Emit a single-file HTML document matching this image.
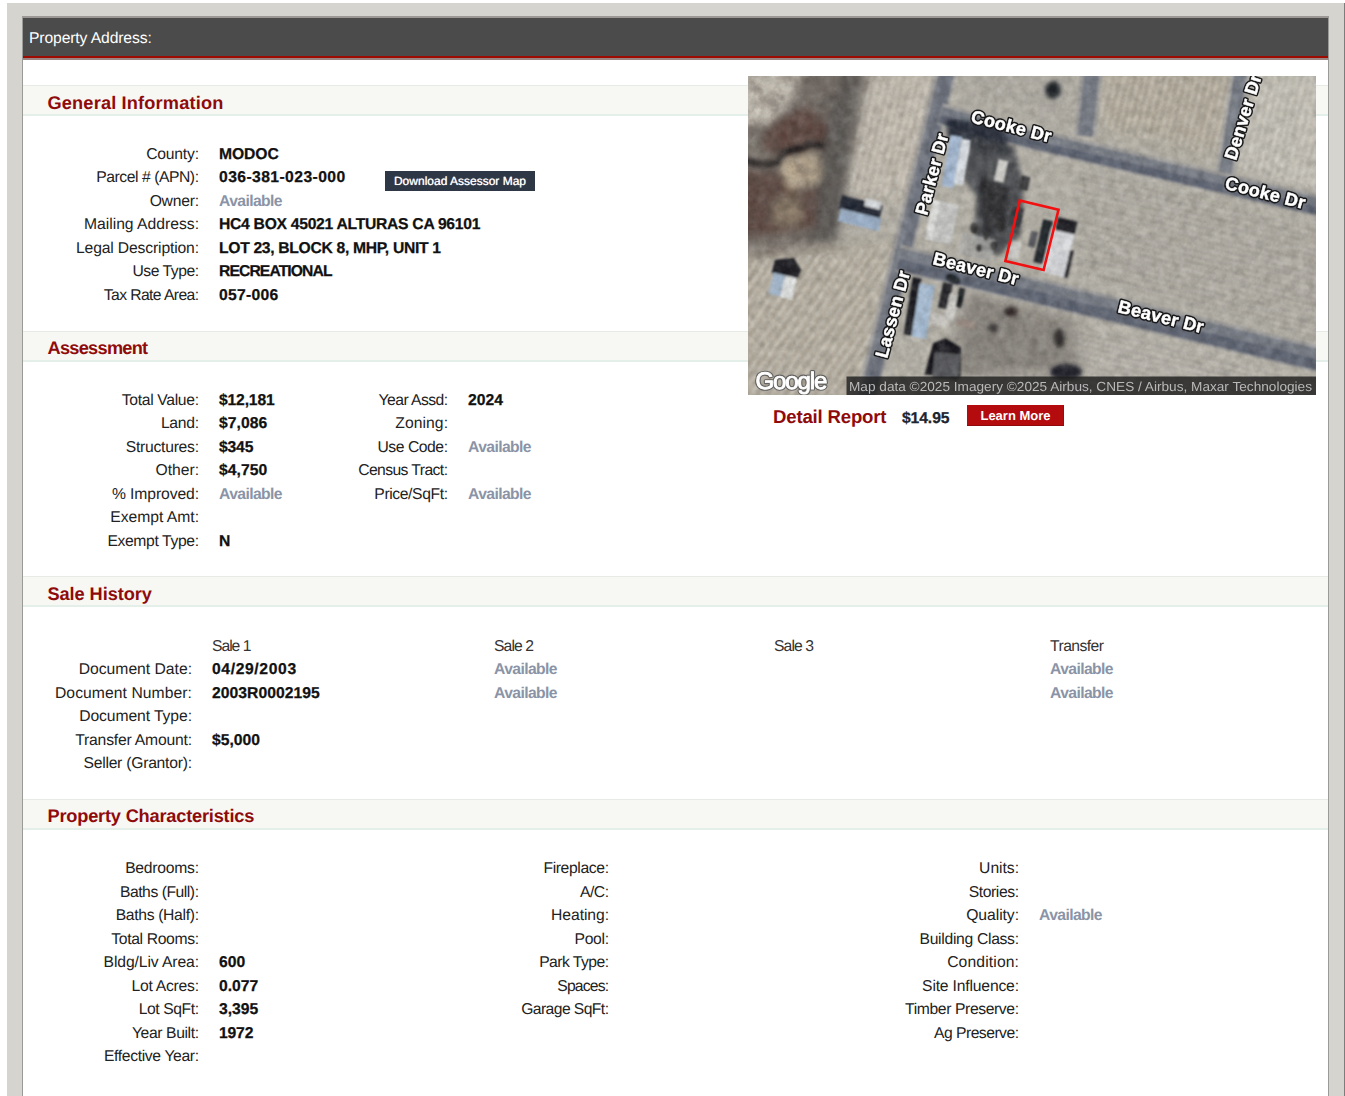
<!DOCTYPE html>
<html lang="en"><head><meta charset="utf-8"><title>Property Detail</title>
<style>
html,body{margin:0;padding:0;}
body{width:1345px;height:1096px;overflow:hidden;background:#fff;position:relative;text-rendering:geometricPrecision;font-family:"Liberation Sans",Arial,sans-serif;font-size:15.7px;color:#222;}
#bg{position:absolute;left:7px;top:3px;width:1337px;height:1093px;background:#d5d4ce;}
#edge{position:absolute;left:1344px;top:3px;width:1px;height:1093px;background:#7d7d7b;}
#panel{position:absolute;left:22px;top:16px;width:1305px;height:1090px;background:#fff;border:1px solid #9a9a98;border-top:2px solid #9c9896;}
#bar{position:absolute;left:0;top:0;width:1305px;height:38px;background:#4b4b4b;border-bottom:2px solid #9d0a02;box-shadow:0 2px 0 #9a8583;color:#fff;}
#bar div{position:absolute;left:6px;top:2px;line-height:38px;white-space:nowrap;}
.band{position:absolute;left:0;width:1305px;height:28px;background:#f7f8f3;border-top:1px solid #e6ebe5;border-bottom:2px solid #e3efe8;}
.band h2{position:absolute;left:24.5px;top:1px;margin:0;font-size:18.2px;line-height:28px;font-weight:bold;color:#8f0a0a;white-space:nowrap;}
.r{position:absolute;height:23.5px;line-height:23.5px;white-space:nowrap;}
.l{text-align:right;color:#222;}
.v{font-weight:bold;color:#111;-webkit-text-stroke:0.25px #111;}
.a{font-weight:bold;color:#8a94a6;}
.h{color:#333;}
</style></head>
<body>
<div id="bg"></div><div id="edge"></div>
<div id="panel">
<div id="bar"><div><span class="t" style="letter-spacing:-0.119px">Property Address:</span></div></div>
<div class="band" style="top:67px"><h2 style="top:2.6px"><span class="t" style="letter-spacing:0.167px">General Information</span></h2></div>
<div class="r l" style="left:-124px;width:300px;top:124.5px"><span class="t" style="letter-spacing:-0.2px;margin-right:0.2px">County:</span></div>
<div class="r v" style="left:196px;top:124.5px"><span class="t" style="letter-spacing:-0.075px">MODOC</span></div>
<div class="r l" style="left:-124px;width:300px;top:148.0px"><span class="t" style="letter-spacing:-0.443px;margin-right:0.443px">Parcel # (APN):</span></div>
<div class="r v" style="left:196px;top:148.0px"><span class="t" style="letter-spacing:0.414px">036-381-023-000</span></div>
<div class="r l" style="left:-124px;width:300px;top:171.5px"><span class="t" style="letter-spacing:-0.24px;margin-right:0.24px">Owner:</span></div>
<div class="r a" style="left:196px;top:171.5px"><span class="t" style="letter-spacing:-0.588px">Available</span></div>
<div class="r l" style="left:-124px;width:300px;top:195.0px"><span class="t">Mailing Address:</span></div>
<div class="r v" style="left:196px;top:195.0px"><span class="t" style="letter-spacing:-0.286px">HC4 BOX 45021 ALTURAS CA 96101</span></div>
<div class="r l" style="left:-124px;width:300px;top:218.5px"><span class="t" style="letter-spacing:-0.153px;margin-right:0.153px">Legal Description:</span></div>
<div class="r v" style="left:196px;top:218.5px"><span class="t" style="letter-spacing:-0.322px">LOT 23, BLOCK 8, MHP, UNIT 1</span></div>
<div class="r l" style="left:-124px;width:300px;top:242.0px"><span class="t" style="letter-spacing:-0.475px;margin-right:0.475px">Use Type:</span></div>
<div class="r v" style="left:196px;top:242.0px"><span class="t" style="letter-spacing:-0.9px">RECREATIONAL</span></div>
<div class="r l" style="left:-124px;width:300px;top:265.5px"><span class="t" style="letter-spacing:-0.592px;margin-right:0.592px">Tax Rate Area:</span></div>
<div class="r v" style="left:196px;top:265.5px"><span class="t" style="letter-spacing:0.283px">057-006</span></div>
<div id="dl" style="position:absolute;left:362px;top:153px;width:150px;height:20px;background:#2e3745;color:#fff;font-size:12px;line-height:20px;text-align:center;white-space:nowrap;text-shadow:0 0 .7px rgba(255,255,255,.9)"><span class="t">Download Assessor Map</span></div>
<div class="band" style="top:313px"><h2 style="top:2px"><span class="t" style="letter-spacing:-0.722px">Assessment</span></h2></div>
<div class="r l" style="left:-124px;width:300px;top:370.5px"><span class="t" style="letter-spacing:-0.327px;margin-right:0.327px">Total Value:</span></div>
<div class="r v" style="left:196px;top:370.5px"><span class="t" style="letter-spacing:-0.167px">$12,181</span></div>
<div class="r l" style="left:125px;width:300px;top:370.5px"><span class="t" style="letter-spacing:-0.556px;margin-right:0.556px">Year Assd:</span></div>
<div class="r v" style="left:445px;top:370.5px"><span class="t" style="letter-spacing:0.033px">2024</span></div>
<div class="r l" style="left:-124px;width:300px;top:394.0px"><span class="t" style="letter-spacing:-0.3px;margin-right:0.3px">Land:</span></div>
<div class="r v" style="left:196px;top:394.0px"><span class="t" style="letter-spacing:0.04px">$7,086</span></div>
<div class="r l" style="left:125px;width:300px;top:394.0px"><span class="t" style="letter-spacing:0.067px;margin-right:-0.067px">Zoning:</span></div>
<div class="r l" style="left:-124px;width:300px;top:417.5px"><span class="t" style="letter-spacing:-0.26px;margin-right:0.26px">Structures:</span></div>
<div class="r v" style="left:196px;top:417.5px"><span class="t" style="letter-spacing:-0.167px">$345</span></div>
<div class="r l" style="left:125px;width:300px;top:417.5px"><span class="t" style="letter-spacing:-0.438px;margin-right:0.438px">Use Code:</span></div>
<div class="r a" style="left:445px;top:417.5px"><span class="t" style="letter-spacing:-0.588px">Available</span></div>
<div class="r l" style="left:-124px;width:300px;top:441.0px"><span class="t" style="letter-spacing:-0.04px;margin-right:0.04px">Other:</span></div>
<div class="r v" style="left:196px;top:441.0px"><span class="t" style="letter-spacing:0.04px">$4,750</span></div>
<div class="r l" style="left:125px;width:300px;top:441.0px"><span class="t" style="letter-spacing:-0.575px;margin-right:0.575px">Census Tract:</span></div>
<div class="r l" style="left:-124px;width:300px;top:464.5px"><span class="t" style="letter-spacing:-0.1px;margin-right:0.1px">% Improved:</span></div>
<div class="r a" style="left:196px;top:464.5px"><span class="t" style="letter-spacing:-0.588px">Available</span></div>
<div class="r l" style="left:125px;width:300px;top:464.5px"><span class="t" style="letter-spacing:-0.39px;margin-right:0.39px">Price/SqFt:</span></div>
<div class="r a" style="left:445px;top:464.5px"><span class="t" style="letter-spacing:-0.588px">Available</span></div>
<div class="r l" style="left:-124px;width:300px;top:488.0px"><span class="t" style="letter-spacing:-0.02px;margin-right:0.02px">Exempt Amt:</span></div>
<div class="r l" style="left:-124px;width:300px;top:511.5px"><span class="t" style="letter-spacing:-0.364px;margin-right:0.364px">Exempt Type:</span></div>
<div class="r v" style="left:196px;top:511.5px"><span class="t">N</span></div>
<div class="band" style="top:558px"><h2 style="top:2.6px"><span class="t" style="letter-spacing:-0.073px">Sale History</span></h2></div>
<div class="r h" style="left:189px;top:616.5px"><span class="t" style="letter-spacing:-1.02px">Sale 1</span></div>
<div class="r h" style="left:471px;top:616.5px"><span class="t" style="letter-spacing:-0.88px">Sale 2</span></div>
<div class="r h" style="left:751px;top:616.5px"><span class="t" style="letter-spacing:-0.88px">Sale 3</span></div>
<div class="r h" style="left:1027px;top:616.5px"><span class="t" style="letter-spacing:-0.543px">Transfer</span></div>
<div class="r l" style="left:-131px;width:300px;top:640.0px"><span class="t" style="letter-spacing:-0.008px;margin-right:0.008px">Document Date:</span></div>
<div class="r v" style="left:189px;top:640.0px"><span class="t" style="letter-spacing:0.622px">04/29/2003</span></div>
<div class="r a" style="left:471px;top:640.0px"><span class="t" style="letter-spacing:-0.588px">Available</span></div>
<div class="r a" style="left:1027px;top:640.0px"><span class="t" style="letter-spacing:-0.588px">Available</span></div>
<div class="r l" style="left:-131px;width:300px;top:663.5px"><span class="t" style="letter-spacing:0.067px;margin-right:-0.067px">Document Number:</span></div>
<div class="r v" style="left:189px;top:663.5px"><span class="t" style="letter-spacing:0.045px">2003R0002195</span></div>
<div class="r a" style="left:471px;top:663.5px"><span class="t" style="letter-spacing:-0.588px">Available</span></div>
<div class="r a" style="left:1027px;top:663.5px"><span class="t" style="letter-spacing:-0.588px">Available</span></div>
<div class="r l" style="left:-131px;width:300px;top:687.0px"><span class="t" style="letter-spacing:-0.085px;margin-right:0.085px">Document Type:</span></div>
<div class="r l" style="left:-131px;width:300px;top:710.5px"><span class="t" style="letter-spacing:-0.2px;margin-right:0.2px">Transfer Amount:</span></div>
<div class="r v" style="left:189px;top:710.5px"><span class="t" style="letter-spacing:-0.02px">$5,000</span></div>
<div class="r l" style="left:-131px;width:300px;top:734.0px"><span class="t" style="letter-spacing:-0.244px;margin-right:0.244px">Seller (Grantor):</span></div>
<div class="band" style="top:781px"><h2 style="top:2.4px"><span class="t" style="letter-spacing:-0.191px">Property Characteristics</span></h2></div>
<div class="r l" style="left:-124px;width:300px;top:839.0px"><span class="t" style="letter-spacing:-0.25px;margin-right:0.25px">Bedrooms:</span></div>
<div class="r l" style="left:-124px;width:300px;top:862.5px"><span class="t" style="letter-spacing:-0.458px;margin-right:0.458px">Baths (Full):</span></div>
<div class="r l" style="left:-124px;width:300px;top:886.0px"><span class="t" style="letter-spacing:-0.317px;margin-right:0.317px">Baths (Half):</span></div>
<div class="r l" style="left:-124px;width:300px;top:909.5px"><span class="t" style="letter-spacing:-0.355px;margin-right:0.355px">Total Rooms:</span></div>
<div class="r l" style="left:-124px;width:300px;top:933.0px"><span class="t" style="letter-spacing:-0.108px;margin-right:0.108px">Bldg/Liv Area:</span></div>
<div class="r v" style="left:196px;top:933.0px"><span class="t" style="letter-spacing:0.05px">600</span></div>
<div class="r l" style="left:-124px;width:300px;top:956.5px"><span class="t" style="letter-spacing:-0.256px;margin-right:0.256px">Lot Acres:</span></div>
<div class="r v" style="left:196px;top:956.5px"><span class="t" style="letter-spacing:-0.025px">0.077</span></div>
<div class="r l" style="left:-124px;width:300px;top:980.0px"><span class="t" style="letter-spacing:-0.412px;margin-right:0.412px">Lot SqFt:</span></div>
<div class="r v" style="left:196px;top:980.0px"><span class="t" style="letter-spacing:-0.025px">3,395</span></div>
<div class="r l" style="left:-124px;width:300px;top:1003.5px"><span class="t" style="letter-spacing:-0.39px;margin-right:0.39px">Year Built:</span></div>
<div class="r v" style="left:196px;top:1003.5px"><span class="t" style="letter-spacing:-0.167px">1972</span></div>
<div class="r l" style="left:-124px;width:300px;top:1027.0px"><span class="t" style="letter-spacing:-0.357px;margin-right:0.357px">Effective Year:</span></div>
<div class="r l" style="left:286px;width:300px;top:839.0px"><span class="t" style="letter-spacing:-0.367px;margin-right:0.367px">Fireplace:</span></div>
<div class="r l" style="left:286px;width:300px;top:862.5px"><span class="t" style="letter-spacing:-0.533px;margin-right:0.533px">A/C:</span></div>
<div class="r l" style="left:286px;width:300px;top:886.0px"><span class="t" style="letter-spacing:-0.071px;margin-right:0.071px">Heating:</span></div>
<div class="r l" style="left:286px;width:300px;top:909.5px"><span class="t" style="letter-spacing:-0.325px;margin-right:0.325px">Pool:</span></div>
<div class="r l" style="left:286px;width:300px;top:933.0px"><span class="t" style="letter-spacing:-0.544px;margin-right:0.544px">Park Type:</span></div>
<div class="r l" style="left:286px;width:300px;top:956.5px"><span class="t" style="letter-spacing:-0.833px;margin-right:0.833px">Spaces:</span></div>
<div class="r l" style="left:286px;width:300px;top:980.0px"><span class="t" style="letter-spacing:-0.573px;margin-right:0.573px">Garage SqFt:</span></div>
<div class="r l" style="left:696px;width:300px;top:839.0px"><span class="t" style="letter-spacing:-0.04px;margin-right:0.04px">Units:</span></div>
<div class="r l" style="left:696px;width:300px;top:862.5px"><span class="t" style="letter-spacing:-0.429px;margin-right:0.429px">Stories:</span></div>
<div class="r l" style="left:696px;width:300px;top:886.0px"><span class="t" style="letter-spacing:-0.057px;margin-right:0.057px">Quality:</span></div>
<div class="r a" style="left:1016px;top:886.0px"><span class="t" style="letter-spacing:-0.588px">Available</span></div>
<div class="r l" style="left:696px;width:300px;top:909.5px"><span class="t" style="letter-spacing:-0.307px;margin-right:0.307px">Building Class:</span></div>
<div class="r l" style="left:696px;width:300px;top:933.0px"><span class="t" style="letter-spacing:0.133px;margin-right:-0.133px">Condition:</span></div>
<div class="r l" style="left:696px;width:300px;top:956.5px"><span class="t" style="letter-spacing:-0.179px;margin-right:0.179px">Site Influence:</span></div>
<div class="r l" style="left:696px;width:300px;top:980.0px"><span class="t" style="letter-spacing:-0.387px;margin-right:0.387px">Timber Preserve:</span></div>
<div class="r l" style="left:696px;width:300px;top:1003.5px"><span class="t" style="letter-spacing:-0.518px;margin-right:0.518px">Ag Preserve:</span></div>
<svg id="map" width="568" height="319" viewBox="0 0 568 319" style="position:absolute;left:725px;top:58px;display:block;overflow:hidden">
<defs>
<filter id="b05" x="-5%" y="-5%" width="110%" height="110%"><feGaussianBlur stdDeviation="0.6"/></filter>
<filter id="b1" x="-20%" y="-20%" width="140%" height="140%"><feGaussianBlur stdDeviation="1"/></filter>
<filter id="b2" x="-20%" y="-20%" width="140%" height="140%"><feGaussianBlur stdDeviation="2"/></filter>
<filter id="b4" x="-30%" y="-30%" width="160%" height="160%"><feGaussianBlur stdDeviation="4"/></filter>
<filter id="b8" x="-40%" y="-40%" width="180%" height="180%"><feGaussianBlur stdDeviation="8"/></filter>
<filter id="b14" x="-50%" y="-50%" width="200%" height="200%"><feGaussianBlur stdDeviation="14"/></filter>
<filter id="noise" x="0" y="0" width="100%" height="100%">
<feTurbulence type="fractalNoise" baseFrequency="0.12" numOctaves="3" seed="7" result="n"/>
<feColorMatrix in="n" type="matrix" values="0 0 0 0 0  0 0 0 0 0  0 0 0 0 0  0.9 0.9 0.9 0 -0.95"/>
</filter>
<filter id="noise3" x="0" y="0" width="100%" height="100%">
<feTurbulence type="fractalNoise" baseFrequency="0.06" numOctaves="4" seed="11" result="n"/>
<feColorMatrix in="n" type="matrix" values="0 0 0 0 0.1  0 0 0 0 0.08  0 0 0 0 0.07  1.6 1.6 1.6 0 -2.1"/>
</filter>
<filter id="noise2" x="0" y="0" width="100%" height="100%">
<feTurbulence type="fractalNoise" baseFrequency="0.10" numOctaves="3" seed="23" result="n"/>
<feColorMatrix in="n" type="matrix" values="0 0 0 0 1  0 0 0 0 1  0 0 0 0 1  0.9 0.9 0.9 0 -0.98"/>
</filter>
<pattern id="st1" width="7" height="7" patternUnits="userSpaceOnUse" patternTransform="rotate(-76)"><rect width="7" height="7" fill="none"/><rect y="0" width="7" height="3" fill="#fff" opacity=".2"/></pattern>
<pattern id="st2" width="6" height="6" patternUnits="userSpaceOnUse" patternTransform="rotate(14)"><rect y="0" width="6" height="2.2" fill="#6d675e" opacity=".16"/></pattern>
<pattern id="st3" width="8" height="8" patternUnits="userSpaceOnUse" patternTransform="rotate(-55)"><rect y="0" width="8" height="3.5" fill="#fff" opacity=".22"/></pattern>
<clipPath id="mc"><rect width="568" height="319"/></clipPath>
</defs>
<g clip-path="url(#mc)">
<rect width="568" height="319" fill="#b7b3a9"/>
<g filter="url(#b8)">
<polygon points="-20,-20 130,-20 118,40 104,90 96,130 84,178 -20,190" fill="#7b756e"/>
</g><g filter="url(#b4)">
<polygon points="-20,-20 62,-20 42,25 25,46 -20,54" fill="#cbc5b9"/>
<polygon points="58,-10 100,-10 80,40 66,90 58,165 86,168 100,100 114,40 126,-10" fill="#5d5a56"/>
<polygon points="22,46 58,30 80,48 76,68 40,80 12,72" fill="#5e4640"/>
<polygon points="-10,96 30,95 45,114 70,110 68,152 -10,162" fill="#5f4943"/>
<polygon points="30,84 70,78 72,104 42,114" fill="#c4b398"/>
<polygon points="24,122 52,120 54,148 26,150" fill="#8c7b68"/>
<polygon points="-10,60 14,68 10,82 -10,82" fill="#8a857c"/>
</g><g filter="url(#b8)">
<polygon points="118,-10 190,-10 160,125 100,120" fill="#beb6a9"/>
<polygon points="-20,180 150,165 110,330 -20,330" fill="#b2aa9b"/>
<polygon points="355,-10 490,-10 470,80 345,50" fill="#b0a898"/>
<polygon points="505,-10 590,-10 590,120 490,95" fill="#c1bdb2"/>
<polygon points="330,85 590,150 590,270 330,205" fill="#b6b2a9"/>
<polygon points="200,215 590,305 590,330 200,330" fill="#bcb8af"/>
<polygon points="215,-10 330,-10 325,45 215,25" fill="#b1ada4"/>
<polygon points="215,215 330,245 330,300 200,300" fill="#8a857e"/>
</g>
<g filter="url(#b1)">
<polygon points="118,0 188,0 160,122 100,118" fill="url(#st1)"/>
<polygon points="0,185 145,170 110,319 0,319" fill="url(#st3)"/>
<polygon points="355,0 490,0 470,80 345,50" fill="url(#st1)"/>
<polygon points="505,0 568,0 568,115 490,95" fill="url(#st1)"/>
<polygon points="330,90 568,150 568,262 330,200" fill="url(#st2)"/>
<polygon points="330,250 568,305 568,319 330,319" fill="url(#st2)"/>
</g>
<g filter="url(#b2)"><polyline points="-5,84 15,89 28,87 36,76 50,73 62,68 78,70" fill="none" stroke="#262220" stroke-width="7" stroke-linejoin="round"/><polyline points="70,30 90,20 110,5" fill="none" stroke="#5b5753" stroke-width="4"/></g>
<g filter="url(#b1)">
<polygon points="187.22,-5 209.22,-5 128.7,325 106.7,325" fill="#a09f9d"/>
<polygon points="191.22,-5 207.22,-5 126.7,325 110.7,325" fill="#777b85"/>
<polygon points="196.22,-5 206.22,-5 125.7,325 115.7,325" fill="#6c717c"/>
<polyline points="344,-5 337,60" fill="none" stroke="#a09f9d" stroke-width="22"/>
<polyline points="344,-5 337,60" fill="none" stroke="#777b85" stroke-width="15"/>
<polyline points="493,-5 477,98" fill="none" stroke="#b0afab" stroke-width="20"/>
<polyline points="493,-5 477,98" fill="none" stroke="#777b85" stroke-width="13"/>
<polyline points="192,38 284,63 575,131" fill="none" stroke="#a09f9d" stroke-width="22"/>
<polyline points="192,39 284,64 575,132" fill="none" stroke="#777b85" stroke-width="17"/>
<polyline points="192,43 284,68 575,136" fill="none" stroke="#5f6573" stroke-width="8"/>
<polyline points="150,182 284,214 575,284" fill="none" stroke="#a09f9d" stroke-width="27"/>
<polyline points="150,183 284,215 575,285" fill="none" stroke="#777b85" stroke-width="22"/>
<polyline points="150,188 284,220 575,290" fill="none" stroke="#5f6573" stroke-width="11"/>
</g>
<g filter="url(#b2)">
<polygon points="198,44 255,46 262,78 236,80 224,70 200,64" fill="#1f2430" opacity=".9"/><polygon points="222,62 266,70 276,110 272,160 250,180 226,170 228,120 214,100" fill="#3d3f44" opacity=".85"/>
<polygon points="230,100 262,112 258,150 236,160" fill="#25272b" opacity=".8"/>
<ellipse cx="305" cy="14" rx="8" ry="9" fill="#22252b"/>
<ellipse cx="263" cy="236" rx="7" ry="5" fill="#2a2220"/>
<ellipse cx="311" cy="262" rx="5" ry="10" fill="#2a2826"/>
<ellipse cx="245" cy="252" rx="5" ry="4" fill="#2a2826"/>
<ellipse cx="318" cy="296" rx="16" ry="8" fill="#1d1f26"/>
</g>
<g filter="url(#b1)">
<g transform="rotate(14 111 138)"><rect x="90" y="124" width="42" height="14" fill="#1d232e"/><rect x="92" y="137" width="42" height="13" fill="#9db2cb"/><rect x="114" y="121" width="16" height="8" fill="#d9dde0"/></g>
<g transform="rotate(14 35 205)"><polygon points="22,186 40,180 50,190 48,202 22,200" fill="#1b1d22"/><rect x="24" y="199" width="12" height="22" fill="#a9bdd2"/><rect x="36" y="199" width="12" height="22" fill="#e4e6e6"/></g>
<g transform="rotate(10 208 85)"><rect x="198" y="60" width="12" height="52" fill="#a7bcd6"/><rect x="210" y="62" width="9" height="46" fill="#dfe4ea"/></g>
<g transform="rotate(12 194 145)"><rect x="181" y="126" width="26" height="40" fill="#c9cac8"/><rect x="181" y="126" width="7" height="40" fill="#e6e6e4"/></g>
<rect x="212" y="160" width="34" height="22" fill="#a9a9a6" opacity=".8" transform="rotate(12 229 171)"/>
<rect x="248" y="84" width="10" height="22" fill="#d2d0cb" transform="rotate(12 253 95)"/>
<rect x="272" y="100" width="9" height="14" fill="#3a3a3c" transform="rotate(12 276 107)"/>
<g transform="rotate(13 305 172)"><rect x="289" y="146" width="10" height="44" fill="#1f2126"/><rect x="280" y="160" width="7" height="16" fill="#55575b"/><rect x="299" y="152" width="24" height="46" fill="#dcdde0"/><rect x="303" y="141" width="20" height="13" fill="#1e1f23"/><rect x="322" y="170" width="4" height="28" fill="#2a2b2f"/></g>
<rect x="262" y="131" width="12" height="20" fill="#2b2d31" opacity=".85" transform="rotate(13 268 141)"/>
<g fill="#2c2c2e" opacity=".8"><ellipse cx="226" cy="152" rx="4" ry="6"/><ellipse cx="238" cy="160" rx="3" ry="5"/><ellipse cx="246" cy="170" rx="4" ry="5"/><ellipse cx="253" cy="150" rx="4" ry="7"/><ellipse cx="231" cy="172" rx="3" ry="4"/></g>
<rect x="262" y="165" width="10" height="18" fill="#cfcfcd" opacity=".8" transform="rotate(13 267 174)"/>
<g transform="rotate(9 175 232)"><rect x="160" y="203" width="9" height="58" fill="#1c1e24"/><rect x="168" y="208" width="15" height="54" fill="#a9bfd6"/></g>
<g transform="rotate(12 202 232)"><rect x="190" y="208" width="10" height="26" fill="#25262a"/><rect x="199" y="218" width="9" height="26" fill="#d6d4cf"/><rect x="207" y="210" width="6" height="20" fill="#1f2024"/><rect x="186" y="240" width="18" height="12" fill="#c9c6c0"/><rect x="212" y="240" width="18" height="8" fill="#9d8f86"/></g>
<ellipse cx="205" cy="203" rx="8" ry="4" fill="#1d2027" transform="rotate(25 205 203)"/>
<g transform="rotate(5 195 282)"><polygon points="178,300 184,268 196,262 212,270 214,300" fill="#18191d"/><rect x="186" y="277" width="26" height="26" fill="#55565a"/></g>
</g>
<rect width="568" height="319" filter="url(#noise)" opacity=".16"/>
<rect width="568" height="319" filter="url(#noise2)" opacity=".14"/>
<mask id="tm" maskUnits="userSpaceOnUse" x="0" y="0" width="160" height="210"><polygon points="-10,-10 124,-10 112,40 98,90 90,130 80,174 -10,180" fill="#fff" filter="url(#b4)"/></mask><g mask="url(#tm)"><rect width="160" height="210" filter="url(#noise3)" opacity=".38"/></g>
<polygon points="271.8,124.4 310.5,133.8 295.6,194 257.4,185" fill="none" stroke="#f21010" stroke-width="2.6"/>
<g transform="rotate(14.5 222 46)"><text x="222" y="46" style="font-family:'Liberation Sans',Arial,sans-serif;font-weight:bold;font-size:18px;letter-spacing:0.3px;fill:#1a1a1a;stroke:#1a1a1a;stroke-width:3.6px;stroke-linejoin:round">Cooke Dr</text><text x="222" y="46" style="font-family:'Liberation Sans',Arial,sans-serif;font-weight:bold;font-size:18px;letter-spacing:0.3px;fill:#fff;stroke:#fff;stroke-width:.5px">Cooke Dr</text></g>
<g transform="rotate(14.5 476 112.5)"><text x="476" y="112.5" style="font-family:'Liberation Sans',Arial,sans-serif;font-weight:bold;font-size:18px;letter-spacing:0.3px;fill:#1a1a1a;stroke:#1a1a1a;stroke-width:3.6px;stroke-linejoin:round">Cooke Dr</text><text x="476" y="112.5" style="font-family:'Liberation Sans',Arial,sans-serif;font-weight:bold;font-size:18px;letter-spacing:0.3px;fill:#fff;stroke:#fff;stroke-width:.5px">Cooke Dr</text></g>
<g transform="rotate(-75 179 140)"><text x="179" y="140" style="font-family:'Liberation Sans',Arial,sans-serif;font-weight:bold;font-size:18px;letter-spacing:0.3px;fill:#1a1a1a;stroke:#1a1a1a;stroke-width:3.6px;stroke-linejoin:round">Parker Dr</text><text x="179" y="140" style="font-family:'Liberation Sans',Arial,sans-serif;font-weight:bold;font-size:18px;letter-spacing:0.3px;fill:#fff;stroke:#fff;stroke-width:.5px">Parker Dr</text></g>
<g transform="rotate(-75 139 283)"><text x="139" y="283" style="font-family:'Liberation Sans',Arial,sans-serif;font-weight:bold;font-size:18px;letter-spacing:0.3px;fill:#1a1a1a;stroke:#1a1a1a;stroke-width:3.6px;stroke-linejoin:round">Lassen Dr</text><text x="139" y="283" style="font-family:'Liberation Sans',Arial,sans-serif;font-weight:bold;font-size:18px;letter-spacing:0.3px;fill:#fff;stroke:#fff;stroke-width:.5px">Lassen Dr</text></g>
<g transform="rotate(14 184 188)"><text x="184" y="188" style="font-family:'Liberation Sans',Arial,sans-serif;font-weight:bold;font-size:18px;letter-spacing:0.3px;fill:#1a1a1a;stroke:#1a1a1a;stroke-width:3.6px;stroke-linejoin:round">Beaver Dr</text><text x="184" y="188" style="font-family:'Liberation Sans',Arial,sans-serif;font-weight:bold;font-size:18px;letter-spacing:0.3px;fill:#fff;stroke:#fff;stroke-width:.5px">Beaver Dr</text></g>
<g transform="rotate(14 369 236)"><text x="369" y="236" style="font-family:'Liberation Sans',Arial,sans-serif;font-weight:bold;font-size:18px;letter-spacing:0.3px;fill:#1a1a1a;stroke:#1a1a1a;stroke-width:3.6px;stroke-linejoin:round">Beaver Dr</text><text x="369" y="236" style="font-family:'Liberation Sans',Arial,sans-serif;font-weight:bold;font-size:18px;letter-spacing:0.3px;fill:#fff;stroke:#fff;stroke-width:.5px">Beaver Dr</text></g>
<g transform="rotate(-73 488 85)"><text x="488" y="85" style="font-family:'Liberation Sans',Arial,sans-serif;font-weight:bold;font-size:18px;letter-spacing:0.3px;fill:#1a1a1a;stroke:#1a1a1a;stroke-width:3.6px;stroke-linejoin:round">Denver Dr</text><text x="488" y="85" style="font-family:'Liberation Sans',Arial,sans-serif;font-weight:bold;font-size:18px;letter-spacing:0.3px;fill:#fff;stroke:#fff;stroke-width:.5px">Denver Dr</text></g>
<rect x="98.5" y="300.5" width="470" height="19" fill="#1c1c1c" opacity=".8"/>
<text x="101" y="314.5" style="font-family:'Liberation Sans',Arial,sans-serif;font-size:13.2px;fill:#b9b9b9" textLength="463" lengthAdjust="spacingAndGlyphs">Map data ©2025 Imagery ©2025 Airbus, CNES / Airbus, Maxar Technologies</text>
<text x="7.5" y="312.5" style="font-family:'Liberation Sans',Arial,sans-serif;font-size:24px;letter-spacing:-1.1px;fill:#555;stroke:#555;stroke-width:3.2px;stroke-linejoin:round;opacity:.85">Google</text>
<text x="7.5" y="312.5" style="font-family:'Liberation Sans',Arial,sans-serif;font-size:24px;letter-spacing:-1.1px;fill:#fff;stroke:#fff;stroke-width:.9px">Google</text>
</g></svg>
<div class="r" style="left:750px;top:387.05px;font-size:18.6px;font-weight:bold;color:#8f0a0a"><span class="t" style="letter-spacing:-0.183px">Detail Report</span></div>
<div class="r v" style="left:879px;top:388.85px;color:#1d2733"><span class="t" style="letter-spacing:-0.1px">$14.95</span></div>
<div id="lm" style="position:absolute;left:944px;top:387px;width:97px;height:21px;background:#b30b0e;box-shadow:inset 0 -1px 0 #93080a,inset -1px 0 0 #a0090b;color:#fff;font-size:13px;line-height:21px;text-align:center;font-weight:bold;white-space:nowrap"><span class="t">Learn More</span></div>
</div>
</body></html>
